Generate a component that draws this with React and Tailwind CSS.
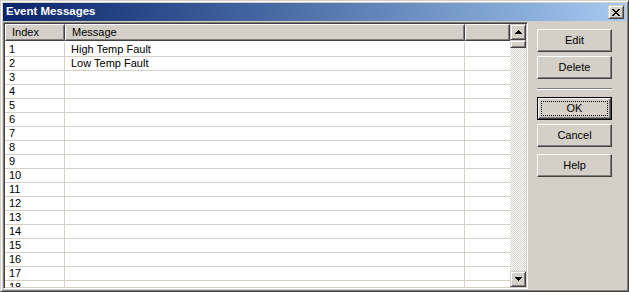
import React from "react";

const rows = Array.from({ length: 18 }, (_, i) => i + 1);
const messages = { 1: "High Temp Fault", 2: "Low Temp Fault" };

// classic 3D borders
const raised =
  "border border-t-white border-l-white border-r-[#404040] border-b-[#404040] shadow-[inset_-1px_-1px_0_#808080]";
const frame =
  "border border-t-[#d4d0c8] border-l-[#d4d0c8] border-r-[#404040] border-b-[#404040] shadow-[inset_1px_1px_0_#fff,inset_-1px_-1px_0_#808080]";
const sunken =
  "border border-t-[#808080] border-l-[#808080] border-r-white border-b-white shadow-[inset_1px_1px_0_#404040,inset_-1px_-1px_0_#d4d0c8]";

const Arrow = ({ down }) => (
  <svg width="7" height="4" viewBox="0 0 7 4" shapeRendering="crispEdges">
    <polygon points={down ? "0,0 7,0 3.5,4" : "0,4 7,4 3.5,0"} fill="#000" />
  </svg>
);

const DlgButton = ({ children }) => (
  <div className={`w-[75px] h-[23px] flex items-center justify-center bg-[#d4d0c8] text-black ${raised}`}>
    {children}
  </div>
);

export default function App() {
  return (
    <div
      className={`w-[629px] h-[292px] bg-[#d4d0c8] p-[2px] flex flex-col text-[11px] text-black font-['Liberation_Sans',Arial,sans-serif] ${frame}`}
    >
      {/* Title bar */}
      <div className="h-[18px] flex items-center justify-between bg-linear-to-r from-[#0a246a] to-[#a6caf0] pl-[3px] pr-[2px]">
        <span className="text-white font-bold text-[11.5px] leading-none">Event Messages</span>
        <div className={`w-[16px] h-[14px] flex items-center justify-center bg-[#d4d0c8] ${frame}`}>
          <svg width="8" height="7" viewBox="0 0 8 7" shapeRendering="crispEdges">
            <path d="M0 0h2v1h-2zM6 0h2v1h-2zM1 1h2v1h-2zM5 1h2v1h-2zM2 2h4v1h-4zM3 3h2v1h-2zM2 4h4v1h-4zM1 5h2v1h-2zM5 5h2v1h-2zM0 6h2v1h-2zM6 6h2v1h-2z" fill="#000" />
          </svg>
        </div>
      </div>

      <div className="flex-1 flex pt-[1px] min-h-0">
        {/* List view */}
        <div className={`w-[525px] h-full bg-white flex ${sunken} p-[1px]`}>
          <div className="w-[505px] flex flex-col overflow-hidden">
            <div className="flex h-[17px] shrink-0 bg-[#d4d0c8]">
              <div className={`w-[60px] pl-[6px] flex items-center ${raised}`}>Index</div>
              <div className={`w-[400px] pl-[6px] flex items-center ${raised}`}>Message</div>
              <div className={`w-[45px] ${raised}`} />
            </div>
            <div className="pt-[2px]">
              {rows.map((n) => (
                <div key={n} className="flex h-[14px] border-b border-[#d4d0c8] leading-[13px]">
                  <div className="w-[60px] pl-[4px] border-r border-[#d4d0c8]">{n}</div>
                  <div className="w-[400px] pl-[6px] border-r border-[#d4d0c8]">{messages[n] || ""}</div>
                  <div className="w-[45px]" />
                </div>
              ))}
            </div>
          </div>

          {/* Scrollbar */}
          <div className="w-[16px] flex flex-col">
            <div className={`h-[16px] shrink-0 flex items-center justify-center bg-[#d4d0c8] ${frame}`}>
              <Arrow />
            </div>
            <div className={`h-[8px] shrink-0 bg-[#d4d0c8] ${frame}`} />
            <div className="flex-1 bg-[repeating-conic-gradient(#ffffff_0_25%,#d4d0c8_0_50%)] bg-[length:2px_2px]" />
            <div className={`h-[16px] shrink-0 flex items-center justify-center bg-[#d4d0c8] ${frame}`}>
              <Arrow down />
            </div>
          </div>
        </div>

        {/* Buttons */}
        <div className="flex-1 flex flex-col pl-[9px] pt-[7px]">
          <DlgButton>Edit</DlgButton>
          <div className="h-[4px]" />
          <DlgButton>Delete</DlgButton>
          <div className="w-[75px] mt-[9px] mb-[7px] border-t border-t-[#808080] border-b border-b-white" />
          <div className="w-[75px] h-[23px] border border-black">
            <div className={`w-full h-full flex items-center justify-center ${raised} p-[2px]`}>
              <div className="w-full h-full border border-dotted border-black flex items-center justify-center">
                OK
              </div>
            </div>
          </div>
          <div className="h-[4px]" />
          <DlgButton>Cancel</DlgButton>
          <div className="h-[7px]" />
          <DlgButton>Help</DlgButton>
        </div>
      </div>
    </div>
  );
}
